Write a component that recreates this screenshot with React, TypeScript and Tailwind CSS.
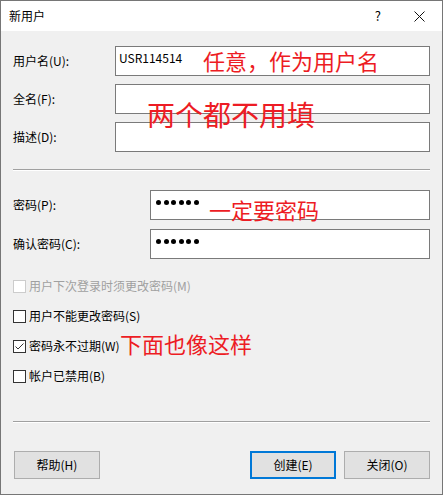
import React from "react";

const font = { fontFamily: '"Noto Sans CJK SC", "Microsoft YaHei UI", sans-serif' };

function Dots() {
  return (
    <div className="flex gap-[2.5px] pl-[5px] pt-[9px]">
      {[0, 1, 2, 3, 4, 5].map((i) => (
        <span key={i} className="block w-[5px] h-[5px] rounded-full bg-black" />
      ))}
    </div>
  );
}

function Check({ checked, disabled, label }: { checked?: boolean; disabled?: boolean; label: string }) {
  return (
    <div className="flex items-center h-[30px]">
      <div
        className={`w-[13px] h-[13px] border bg-white flex items-center justify-center ${
          disabled ? "border-[#cccccc]" : "border-[#333333]"
        }`}
      >
        {checked && (
          <svg width="11" height="11" viewBox="0 0 11 11">
            <path d="M1.5 5.5 L4 8 L9.5 2.5" fill="none" stroke="#333" strokeWidth="1" />
          </svg>
        )}
      </div>
      <span className={`ml-[3px] text-[12px] ${disabled ? "text-[#a0a0a0]" : "text-black"}`}>{label}</span>
    </div>
  );
}

export default function App() {
  return (
    <div style={font} className="relative w-[443px] h-[495px] border border-[#767676] bg-[#f0f0f0] flex flex-col text-[12px] text-black overflow-hidden">
      <div className="h-[30px] bg-white flex items-center shrink-0">
        <span className="ml-[8px] text-[12px]">新用户</span>
        <span className="ml-auto mr-[33px] text-[13px]">?</span>
        <svg className="mr-[17px]" width="11" height="11" viewBox="0 0 11 11">
          <path d="M0.5 0.5 L10.5 10.5 M10.5 0.5 L0.5 10.5" stroke="#111" strokeWidth="1" />
        </svg>
      </div>

      <div className="flex flex-col px-[12px] pt-[15px]">
        <div className="flex items-center h-[30px]">
          <span className="w-[102px]">用户名(U):</span>
          <div className="flex-1 h-[30px] border border-[#7a7a7a] bg-white pl-[3px] pt-[2px] leading-[18px]">USR114514</div>
        </div>
        <div className="flex items-center h-[30px] mt-[8px]">
          <span className="w-[102px]">全名(F):</span>
          <div className="flex-1 h-[30px] border border-[#7a7a7a] bg-white" />
        </div>
        <div className="flex items-center h-[30px] mt-[8px]">
          <span className="w-[102px]">描述(D):</span>
          <div className="flex-1 h-[30px] border border-[#7a7a7a] bg-white" />
        </div>

        <div className="mt-[17px] border-t border-[#a0a0a0] border-b border-b-white" />

        <div className="flex items-center h-[30px] mt-[19px]">
          <span className="w-[137px]">密码(P):</span>
          <div className="flex-1 h-[30px] border border-[#7a7a7a] bg-white">
            <Dots />
          </div>
        </div>
        <div className="flex items-center h-[30px] mt-[9px]">
          <span className="w-[137px]">确认密码(C):</span>
          <div className="flex-1 h-[30px] border border-[#7a7a7a] bg-white">
            <Dots />
          </div>
        </div>

        <div className="flex flex-col mt-[12px]">
          <Check disabled label="用户下次登录时须更改密码(M)" />
          <Check label="用户不能更改密码(S)" />
          <Check checked label="密码永不过期(W)" />
          <Check label="帐户已禁用(B)" />
        </div>

        <div className="mt-[30px] border-t border-[#a0a0a0] border-b border-b-white" />

        <div className="flex mt-[28px] pl-[1px]">
          <button className="w-[86px] h-[28px] border border-[#adadad] bg-[#e1e1e1] text-[12px]">帮助(H)</button>
          <button className="ml-auto w-[86px] h-[28px] border-2 border-[#0078d7] bg-[#e1e1e1] text-[12px]">创建(E)</button>
          <button className="ml-[8px] w-[86px] h-[28px] border border-[#adadad] bg-[#e1e1e1] text-[12px]">关闭(O)</button>
        </div>
      </div>

      <span className="absolute left-[202px] top-[44px] text-[22px] leading-[30px] text-[#ed1c24]">任意，作为用户名</span>
      <span className="absolute left-[146px] top-[94px] text-[28px] leading-[38px] text-[#ed1c24]">两个都不用填</span>
      <span className="absolute left-[208px] top-[193px] text-[22px] leading-[30px] text-[#ed1c24]">一定要密码</span>
      <span className="absolute left-[119px] top-[327px] text-[22px] leading-[30px] text-[#ed1c24]">下面也像这样</span>
    </div>
  );
}
